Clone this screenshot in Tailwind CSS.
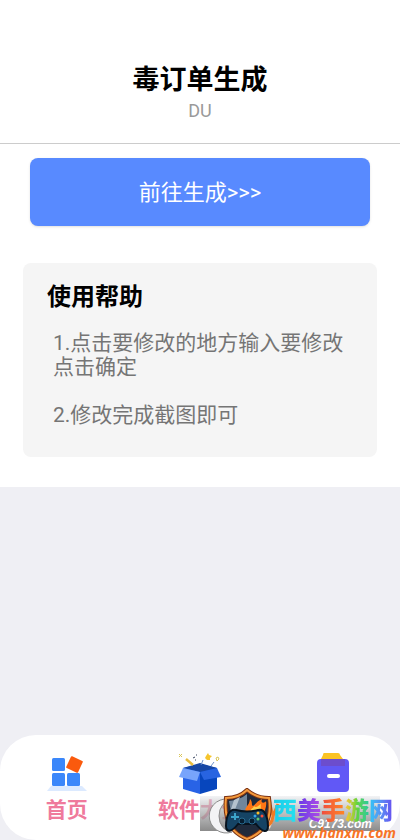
<!DOCTYPE html>
<html lang="zh-CN">
<head>
    <meta charset="UTF-8">
    <meta name="viewport" content="width=device-width, initial-scale=1.0">
    <title>毒订单生成</title>
    <script src="https://cdn.jsdelivr.net/npm/@tailwindcss/browser@4"></script>
</head>
<body class="min-h-screen flex flex-col bg-[#efeff4] font-[Roboto,'Noto_Sans_CJK_SC',sans-serif]">
    <!-- 顶部标题 -->
    <header class="bg-white border-b border-[#cccccc] pt-[62px] pb-5 text-center">
        <h1 class="text-[27px] leading-9 font-bold text-black">毒订单生成</h1>
        <p class="text-lg leading-[25px] text-[#9a9a9a]">DU</p>
    </header>

    <main class="bg-white px-[23px] pt-[14px] pb-[30px]">
        <div class="px-[7px]">
            <button type="button" class="w-full h-[68px] rounded-lg bg-[#588aff] text-[22px] text-white shadow-sm">前往生成&gt;&gt;&gt;</button>
        </div>

        <!-- 使用帮助 -->
        <section class="mt-[37px] rounded-lg bg-[#f5f5f5] px-6 pt-[18px] pb-[30px]">
            <h2 class="text-2xl leading-8 font-bold text-black">使用帮助</h2>
            <div class="mt-[18px] pl-[6px] space-y-6 text-[21px] leading-6 text-[#757575]">
                <p>1.点击要修改的地方输入要修改<br>点击确定</p>
                <p>2.修改完成截图即可</p>
            </div>
        </section>
    </main>

    <!-- 底部导航 -->
    <nav class="relative mt-auto h-[105px] rounded-[36px] bg-white">
        <div class="grid grid-cols-3 pt-4 text-center text-[21px] leading-[30px] font-bold text-[#ef7a9c]">
            <a href="#" class="flex flex-col items-center">
                <svg class="w-11 h-11" viewBox="0 0 44 44">
                    <path d="M6 35h31l5 5H2z" fill="#dceaff"/>
                    <rect x="7" y="7" width="13" height="13" rx="1.5" fill="#3b87fa"/>
                    <rect x="7" y="22" width="13" height="13" rx="1.5" fill="#3b87fa"/>
                    <rect x="22" y="22" width="13" height="13" rx="1.5" fill="#3b87fa"/>
                    <rect x="23" y="7" width="13" height="13" rx="1" fill="#fa5a0d" transform="rotate(25 29.500 13.500)"/>
                </svg>
                <span>首页</span>
            </a>
            <a href="#" class="flex flex-col items-center">
                <svg class="w-11 h-11" viewBox="0 0 44 44">
                    <path d="M5 17l17-4v30L5 38z" fill="#2863e6"/>
                    <path d="M22 13l17 4v21l-17 5z" fill="#0746bd"/>
                    <path d="M5 17l17-5 17 5-17 4z" fill="#1747a5"/>
                    <path d="M5 17l17 4-3 9-18-4z" fill="#78a4fb"/>
                    <path d="M39 17l-17 4 4 8 17-3z" fill="#2864e1"/>
                    <path d="M8 8l7 6" stroke="#e7bb3d" stroke-width="2.500"/>
                    <path d="M23 14l2-5M33 15l3-4" stroke="#6d91c9" fill="none"/>
                    <path d="M30 2l1 2 3 1-2 2v2h-3l-2-2 1-2z" fill="#f6c52d"/>
                    <path d="M1 3l3 3M4 3L1 6M38 7l2-1 1 2-2 2z" stroke="#d9c65b" fill="none"/>
                    <path d="M15 7l2-1M18 4h1M17 9h1" stroke="#34405c"/>
                </svg>
                <span>软件大全</span>
            </a>
            <a href="#" class="flex flex-col items-center">
                <svg class="w-11 h-11" viewBox="0 0 44 44">
                    <path d="M13 2h14q2 0 2 2l3 4v7H10V8l2-4q0-2 1-2z" fill="#fbc323"/>
                    <rect x="6" y="8" width="32" height="33" rx="4" fill="#6158f6"/>
                    <path d="M10 8h24v7H10z" fill="#6c4dcd"/>
                    <rect x="16" y="23" width="13" height="4" rx="2" fill="#fff"/>
                </svg>
                <span class="text-white">我的</span>
            </a>
        </div>

        <!-- 站点水印 -->
        <div class="absolute right-0 bottom-0 w-50 h-[52px]">
            <div class="absolute left-0 right-5 top-2 h-[35px] bg-linear-to-b from-gray-200/50 to-[#858585]/95"></div>
            <div class="absolute right-7 top-7 font-['Liberation_Sans',sans-serif] text-xs leading-4 font-bold italic text-white">C9173.com</div>
            <svg class="absolute left-1 top-0 w-19 h-[52px]" viewBox="0 0 76 52">
                <path d="M28 12a17 17 0 1 0 0 32 13 16 0 1 1 0-32z" fill="#f3f3f5" stroke="#8b8b8b"/>
                <path d="M62 14l6 16-4 10" fill="none" stroke="#f3d9c4" stroke-width="4"/>
                <path d="M66 17l3 11 5-12M69 28q-1 9-7 10" fill="none" stroke="#f07b25" stroke-width="3"/>
                <path d="M43 2q9 8 22 8c3 19-3 34-22 41C25 44 20 28 22 10q13 0 21-8z" fill="#202a3b" stroke="#7a3215" stroke-width="4"/>
                <path d="M43 2q9 8 22 8c3 19-3 34-22 41C25 44 20 28 22 10q13 0 21-8z" fill="none" stroke="#f49a3c" stroke-width="2"/>
                <path d="M43 6v18H27l-2-11q11-1 18-7z" fill="#71869b"/>
                <path d="M30 12l-4 12h4l6-15z" fill="#b4c2ce"/>
                <path d="M41 25c0-8 4-6 5-14 3 3 1 6 3 7 3-2 4-5 9-7-2 5 3 4 4 2 1 5-1 9-3 14z" fill="#ff7615"/>
                <path d="M46 25c0-5 3-4 4-7 2 3 5-1 7-2-1 3 1 5-1 9z" fill="#ffd04c"/>
                <path d="M32 22q11 3 22 0c7-2 10 8 10 16 0 8-6 6-12-2H34c-6 8-12 9-12 2 0-9 3-18 10-16z" fill="#154364" stroke="#07131f" stroke-width="2"/>
                <path d="M31 25v7m-4-3h8" stroke="#3da5ca" stroke-width="2"/>
                <circle cx="38" cy="33" r="3" fill="#071e31" stroke="#286b91"/>
                <circle cx="48" cy="33" r="3" fill="#071e31" stroke="#286b91"/>
                <circle cx="54" cy="25" r="1.500" fill="#ffbd28"/>
                <circle cx="58" cy="28" r="1.500" fill="#ff4c39"/>
                <circle cx="51" cy="28" r="1.500" fill="#32a5eb"/>
                <circle cx="54" cy="31" r="1.500" fill="#5dc36f"/>
            </svg>
            <div class="absolute right-[7px] top-[7px] flex text-2xl leading-8 font-black">
                <span class="bg-linear-to-r from-[#18cbe9] to-[#25e0f0] bg-clip-text text-transparent">西</span>
                <span class="bg-linear-to-r from-[#6537e8] to-[#b04ae5] bg-clip-text text-transparent">美</span>
                <span class="bg-linear-to-r from-[#ef4a3d] to-[#ff8620] bg-clip-text text-transparent">手</span>
                <span class="bg-linear-to-r from-[#ffc12e] via-[#60d43a] to-[#26c99c] bg-clip-text text-transparent">游</span>
                <span class="bg-linear-to-r from-[#21c9f5] to-[#6748ef] bg-clip-text text-transparent">网</span>
            </div>
            <div class="absolute right-1 -bottom-px font-['Noto_Sans',sans-serif] text-sm leading-4 font-bold italic text-[#f77427]">www.hanxm.com</div>
        </div>
    </nav>
</body>
</html>
